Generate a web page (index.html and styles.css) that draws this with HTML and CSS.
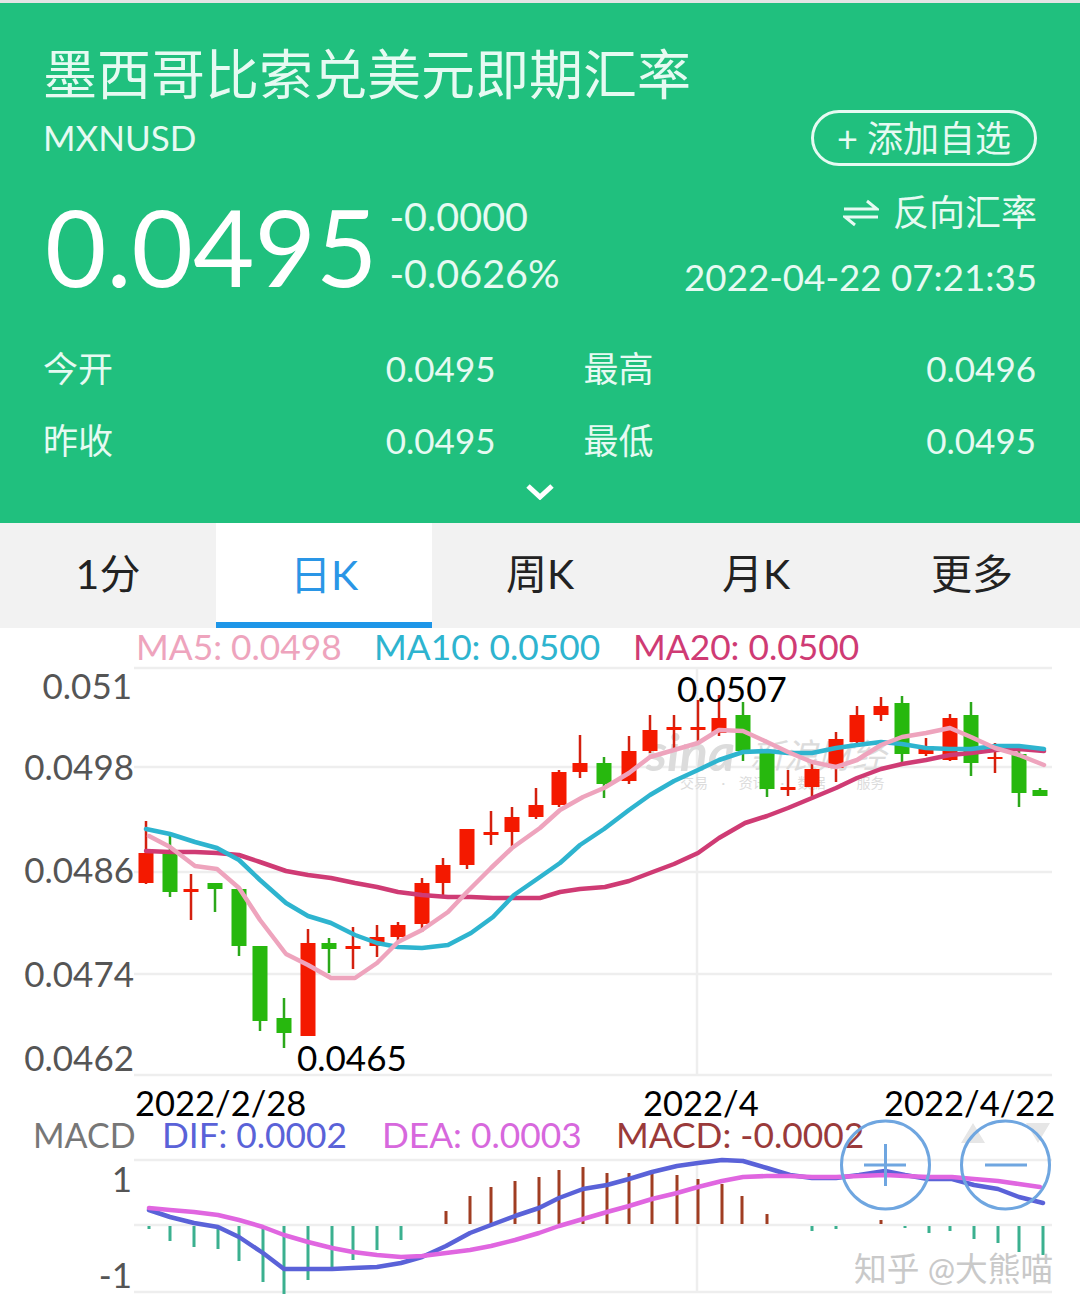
FILE: index.html
```html
<!DOCTYPE html>
<html lang="zh-CN">
<head>
<meta charset="UTF-8" />
<meta name="viewport" content="width=device-width, initial-scale=1" />
<title>墨西哥比索兑美元即期汇率</title>
<link rel="stylesheet" href="styles.css">
</head>
<body>

<!-- Quote header -->
<div class="quote-header">
  <div class="quote-title">墨西哥比索兑美元即期汇率</div>
  <div class="sub-row">
    <div class="quote-code">MXNUSD</div>
    <button class="add-button">+ 添加自选</button>
  </div>
  <div class="price-row">
    <div class="price">0.0495</div>
    <div class="change">
      <div>-0.0000</div>
      <div>-0.0626%</div>
    </div>
    <div class="price-side">
      <div class="reverse">
        <svg class="reverse-icon" viewBox="0 0 36 30"><path d="M1 11H34L24 3M35 19H2L12 27"/></svg>
        <span>反向汇率</span>
      </div>
      <div class="quote-time">2022-04-22 07:21:35</div>
    </div>
  </div>
  <div class="stats">
    <div class="stat"><span>今开</span><span>0.0495</span></div>
    <div class="stat"><span>最高</span><span>0.0496</span></div>
    <div class="stat"><span>昨收</span><span>0.0495</span></div>
    <div class="stat"><span>最低</span><span>0.0495</span></div>
  </div>
  <svg class="chevron" viewBox="0 0 28 16"><path d="M2 2L14 13L26 2"/></svg>
</div>

<!-- Period tabs -->
<div class="tabs">
  <div class="tab">1分</div>
  <div class="tab active">日K</div>
  <div class="tab">周K</div>
  <div class="tab">月K</div>
  <div class="tab">更多</div>
</div>

<!-- Chart: viewBox uses page coordinates -->
<svg class="chart" id="chart" viewBox="0 628 1080 687">
  <g class="grid">
    <path d="M134 668H1052M134 767H1052M134 872H1052M134 974H1052M134 1075H1052M697 668V1075"/>
    <path d="M134 1160H1052M134 1225H1052M134 1292H1052M697 1160V1292"/>
  </g>

  <g class="watermark">
    <text class="wm-sina" x="646" y="771">sina</text>
    <text class="wm-name" x="750" y="768">新浪财经</text>
    <text class="wm-sub" x="680" y="788">交易 · 资讯 · 数据 · 服务</text>
  </g>

  <g id="candles"></g>
  <g id="lines"></g>

  <text class="legend ma5" x="136" y="660">MA5: 0.0498</text>
  <text class="legend ma10" x="374" y="660">MA10: 0.0500</text>
  <text class="legend ma20" x="633" y="660">MA20: 0.0500</text>

  <g class="axis">
    <text x="132" y="699">0.051</text>
    <text x="134" y="780">0.0498</text>
    <text x="134" y="883">0.0486</text>
    <text x="134" y="987">0.0474</text>
    <text x="134" y="1071">0.0462</text>
    <text x="132" y="1192">1</text>
    <text x="132" y="1288">-1</text>
  </g>

  <text class="mark" x="677" y="702">0.0507</text>
  <text class="mark" x="297" y="1071">0.0465</text>
  <text class="date" x="135" y="1116">2022/2/28</text>
  <text class="date" x="643" y="1116">2022/4</text>
  <text class="date" x="884" y="1116">2022/4/22</text>

  <text class="legend macd-name" x="33" y="1148">MACD</text>
  <text class="legend dif" x="162" y="1148">DIF: 0.0002</text>
  <text class="legend dea" x="382" y="1148">DEA: 0.0003</text>
  <text class="legend macd" x="616" y="1148">MACD: -0.0002</text>

  <path class="faint-arrow" d="M973 1123L985 1143H961ZM1026 1123H1050L1038 1143Z"/>
  <text class="credit" x="854" y="1281">知乎 @大熊喵</text>

  <!-- Zoom buttons -->
  <g class="zoom-button">
    <circle cx="885.5" cy="1165" r="44"/>
    <path d="M864 1165H906M885.5 1144V1186"/>
    <circle cx="1005.5" cy="1165" r="44"/>
    <path d="M985 1165H1027"/>
  </g>
</svg>

<script src="chart.js"></script>
</body>
</html>
```

FILE: styles.css
```css
/* Reset and base */
* {
  box-sizing: border-box;
}
body {
  margin: 0;
  font-family: Lato, "Noto Sans CJK SC", sans-serif;
  background-color: #fff;
  color: #222;
}
/* Quote header */
.quote-header {
  height: 523px;
  padding: 40px 43px 0;
  border-top: 3px solid #e4e4e4;
  background-color: #20c07e;
  color: #e6faf2;
  display: flex;
  flex-direction: column;
}
.quote-title {
  font-size: 54px;
  line-height: 64px;
}
.sub-row {
  display: flex;
  justify-content: space-between;
  align-items: center;
  margin-top: 3px;
}
.quote-code {
  padding-bottom: 2px;
  font-size: 35px;
  line-height: 42px;
}
.add-button {
  width: 226px;
  height: 56px;
  padding: 0 0 1px;
  border: 3px solid #e6faf2;
  border-radius: 28px;
  background: none;
  color: #e6faf2;
  font-family: inherit;
  font-size: 36px;
  line-height: 36px;
}
.price-row {
  display: flex;
  margin-top: 12px;
}
.price {
  margin-left: 2px;
  font-size: 106px;
  line-height: 136px;
  color: #fff;
}
.change {
  margin-left: 12px;
  padding-top: 9px;
  font-size: 39.5px;
  line-height: 57px;
}
.price-side {
  margin-left: auto;
  font-size: 36.7px;
  line-height: 65px;
  text-align: right;
}
.reverse {
  display: flex;
  justify-content: flex-end;
  align-items: center;
  gap: 14px;
  padding-top: 2px;
  font-size: 36px;
}
.reverse-icon {
  width: 36px;
  height: 30px;
  fill: none;
  stroke: #e6faf2;
  stroke-width: 3;
}
/* Open, high, close, low */
.stats {
  display: grid;
  grid-template-columns: 1fr 1fr;
  column-gap: 88px;
  margin-top: 18px;
  margin-right: 1px;
}
.stat {
  display: flex;
  justify-content: space-between;
  font-size: 35px;
  line-height: 72px;
}
.chevron {
  align-self: center;
  width: 28px;
  height: 16px;
  margin-top: 8px;
  fill: none;
  stroke: #fff;
  stroke-width: 5;
}
/* Period tabs */
.tabs {
  display: flex;
  height: 105px;
  background-color: #f2f2f2;
}
.tab {
  flex: 1;
  display: flex;
  align-items: center;
  justify-content: center;
  padding-bottom: 9px;
  font-size: 41px;
  color: #222;
}
.tab.active {
  background-color: #fff;
  border-bottom: 6px solid #1e96e8;
  padding-bottom: 2px;
  color: #2a96e6;
}
/* Chart */
.chart {
  display: block;
  width: 1080px;
  height: 687px;
  overflow: visible;
}
.grid path {
  fill: none;
  stroke: #eee;
  stroke-width: 2.5;
}
.watermark text {
  fill: #dcdcdc;
}
.wm-sina {
  font-size: 52px;
  font-weight: bold;
  font-style: italic;
}
.wm-name {
  font-size: 34px;
  font-style: italic;
}
.wm-sub {
  font-size: 14px;
  word-spacing: 10px;
}
.legend {
  font-size: 35.3px;
}
.axis text {
  font-size: 35px;
  fill: #555;
  text-anchor: end;
}
.mark {
  font-size: 35px;
  fill: #000;
}
.date {
  font-size: 34.5px;
  fill: #000;
}
.ma5 { fill: #eea4bd; }
.ma10 { fill: #2eb4cf; }
.ma20 { fill: #cf3b74; }
.macd-name { fill: #777; font-size: 34px; }
.dif { fill: #5a62d8; }
.dea { fill: #d768dd; }
.macd { fill: #9a3a3a; }
.candle-up { fill: #f41900; }
.candle-down { fill: #27b80e; }
.wick-up { fill: #d3200f; }
.wick-down { fill: #2ba81a; }
.bar-up { fill: #a03d22; }
.bar-down { fill: #3bb08f; }
.line {
  fill: none;
  stroke-width: 4.5;
  stroke-linejoin: round;
  stroke-linecap: round;
}
.line-ma5 { stroke: #eea4bd; }
.line-ma10 { stroke: #2eb4cf; }
.line-ma20 { stroke: #cf3b74; }
.line-dif { stroke: #5a62d8; }
.line-dea { stroke: #e066e0; }
.faint-arrow {
  fill: #e6e6e6;
}
.credit {
  font-size: 32.7px;
  fill: #c9c9c9;
}
.zoom-button circle {
  fill: none;
  stroke: #6fa6e0;
  stroke-width: 3;
}
.zoom-button path {
  fill: none;
  stroke: #6fa6e0;
  stroke-width: 3;
}
```

FILE: chart.js
```js
// Candles: x, wick top, body top, body bottom, wick bottom, direction
const candles = [
  [146, 821, 853, 883, 884, "up"], [170, 836, 853, 892, 897, "down"],
  [191, 874, 889, 892, 920, "up"], [215, 883, 883, 889, 912, "down"],
  [239, 889, 889, 946, 956, "down"], [260, 946, 946, 1021, 1031, "down"],
  [284, 998, 1018, 1033, 1048, "down"], [308, 929, 943, 1036, 1036, "up"],
  [329, 938, 943, 949, 973, "down"], [353, 927, 946, 949, 969, "up"],
  [377, 925, 937, 946, 957, "up"], [398, 922, 925, 937, 942, "up"],
  [422, 878, 883, 924, 932, "up"], [443, 858, 865, 883, 895, "up"],
  [467, 829, 829, 865, 869, "up"], [491, 811, 832, 835, 845, "up"],
  [512, 807, 817, 832, 846, "up"], [536, 788, 805, 817, 819, "up"],
  [559, 770, 772, 805, 807, "up"], [580, 735, 763, 772, 778, "up"],
  [604, 757, 763, 784, 798, "down"], [629, 736, 751, 781, 784, "up"],
  [650, 715, 730, 751, 753, "up"], [674, 715, 727, 730, 751, "up"],
  [698, 700, 727, 730, 743, "up"], [719, 695, 718, 733, 736, "up"],
  [743, 702, 715, 751, 761, "down"], [767, 751, 753, 789, 797, "down"],
  [788, 770, 787, 790, 796, "up"], [812, 763, 769, 787, 796, "up"],
  [836, 732, 739, 768, 782, "up"], [857, 706, 715, 742, 744, "up"],
  [881, 697, 706, 715, 721, "up"], [902, 696, 703, 754, 763, "down"],
  [926, 738, 746, 754, 756, "up"], [950, 714, 718, 760, 761, "up"],
  [971, 702, 715, 763, 776, "down"], [995, 743, 757, 759, 773, "up"],
  [1019, 751, 754, 793, 807, "down"], [1040, 788, 790, 796, 796, "down"]
];

// MACD bars: x, end of the bar (1225 is the zero line)
const bars = [
  [149, 1229], [170, 1241], [194, 1247], [218, 1249], [239, 1261], [263, 1282],
  [284, 1294], [308, 1280], [332, 1270], [353, 1260], [377, 1250], [401, 1240],
  [446, 1211], [470, 1196], [491, 1187], [515, 1181], [539, 1177], [559, 1170],
  [583, 1167], [607, 1173], [629, 1173], [652, 1171], [677, 1175], [698, 1179],
  [722, 1184], [742, 1196], [767, 1214], [812, 1231], [836, 1229], [881, 1220],
  [905, 1228], [929, 1233], [950, 1231], [974, 1239], [998, 1243], [1019, 1252],
  [1043, 1255]
];

// Lines as "x,y" lists
const lines = {
  "line-ma20": "146,851 170,852 195,852 217,853 239,855 260,862 286,871 308,875 331,878 355,883 377,887 398,892 422,895 448,897 471,897 493,898 514,898 540,898 560,892 580,889 605,887 629,881 650,873 674,864 698,853 719,838 745,823 767,816 788,808 812,798 836,788 857,778 881,769 902,764 926,760 950,755 971,753 995,750 1019,749 1044,751",
  "line-ma10": "146,829 170,834 195,842 217,848 239,860 260,880 286,903 308,916 331,923 355,935 377,943 398,947 422,948 448,945 471,933 493,917 514,895 540,877 560,863 580,845 604,829 629,810 650,795 674,781 698,770 719,760 743,752 767,751 788,753 812,753 836,748 857,745 881,742 902,744 926,748 950,749 971,749 995,746 1019,746 1044,749",
  "line-ma5": "149,836 170,847 195,866 217,869 239,888 260,920 286,954 308,965 331,978 355,978 377,963 398,942 422,930 448,912 467,892 491,868 512,848 540,828 560,810 583,797 604,788 629,773 650,757 674,750 698,743 719,730 743,731 767,742 788,752 812,762 836,767 857,760 881,745 902,737 926,733 950,728 971,737 995,748 1019,755 1044,765",
  "line-dif": "149,1210 170,1217 194,1223 218,1227 239,1237 263,1253 284,1269 308,1269 332,1269 353,1268 377,1267 401,1263 422,1257 446,1246 470,1233 491,1225 515,1216 539,1208 559,1198 583,1189 607,1185 629,1179 652,1172 677,1166 698,1163 722,1160 743,1161 767,1168 790,1175 812,1178 836,1178 859,1175 885,1171 905,1175 928,1179 952,1179 974,1185 998,1189 1019,1197 1043,1203",
  "line-dea": "149,1208 170,1210 194,1212 218,1215 239,1220 263,1227 284,1235 308,1242 332,1248 353,1252 377,1255 401,1257 422,1256 446,1253 470,1250 491,1246 515,1240 539,1233 559,1226 583,1219 607,1212 629,1206 652,1199 677,1193 698,1187 722,1181 743,1177 767,1176 790,1176 812,1177 836,1177 859,1176 885,1175 905,1176 928,1177 952,1177 974,1179 998,1181 1019,1184 1040,1187"
};

const SVG_NS = "http://www.w3.org/2000/svg";
const candleGroup = document.getElementById("candles");
const lineGroup = document.getElementById("lines");

function addRect(parent, cls, x, y, width, height) {
  const rect = document.createElementNS(SVG_NS, "rect");
  rect.setAttribute("class", cls);
  rect.setAttribute("x", x);
  rect.setAttribute("y", y);
  rect.setAttribute("width", width);
  rect.setAttribute("height", height);
  parent.appendChild(rect);
}

candles.forEach(([x, wickTop, bodyTop, bodyBottom, wickBottom, dir]) => {
  addRect(candleGroup, "wick-" + dir, x - 1.25, wickTop, 2.5, wickBottom - wickTop);
  addRect(candleGroup, "candle-" + dir, x - 7.5, bodyTop, 15, bodyBottom - bodyTop);
});

bars.forEach(([x, end]) => {
  const up = end < 1225;
  const top = up ? end : 1226;
  const height = up ? 1224 - end : end - 1226;
  addRect(candleGroup, up ? "bar-up" : "bar-down", x - 1.5, top, 3, height);
});

Object.keys(lines).forEach(name => {
  const line = document.createElementNS(SVG_NS, "polyline");
  line.setAttribute("class", "line " + name);
  line.setAttribute("points", lines[name]);
  lineGroup.appendChild(line);
});
```
